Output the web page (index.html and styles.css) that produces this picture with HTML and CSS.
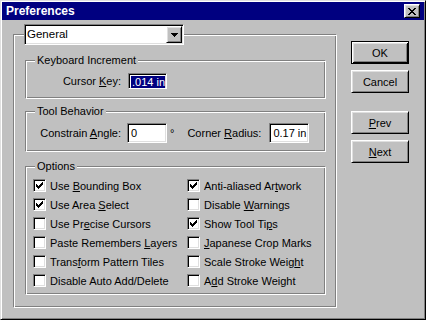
FILE: index.html
```html
<!DOCTYPE html>
<html>
<head>
<meta charset="utf-8">
<title>Preferences</title>
<link rel="stylesheet" href="styles.css">
</head>
<body>
<div class="window">
  <div class="titlebar">
    <span class="title">Preferences</span>
    <span class="close">
      <svg width="8" height="7" viewBox="0 0 8 7" shape-rendering="crispEdges"><path fill="#000" d="M0 0h2v1H0z M6 0h2v1H6z M1 1h2v1H1z M5 1h2v1H5z M2 2h4v1H2z M3 3h2v1H3z M2 4h4v1H2z M1 5h2v1H1z M5 5h2v1H5z M0 6h2v1H0z M6 6h2v1H6z"/></svg>
    </span>
  </div>
  <div class="body">
    <div class="frame outer">
      <div class="combo">
        <span class="combo-text">General</span>
        <span class="combo-btn">
          <svg width="7" height="4" viewBox="0 0 7 4" shape-rendering="crispEdges"><path fill="#000" d="M0 0h7v1H0z M1 1h5v1H1z M2 2h3v1H2z M3 3h1v1H3z"/></svg>
        </span>
      </div>

      <div class="frame group ki">
        <div class="caption">Keyboard Increment</div>
        <div class="row ki-row">
          <span class="lbl">Cursor <u>K</u>ey:</span>
          <span class="field field-sm"><span class="sel">.014 in</span></span>
        </div>
      </div>

      <div class="frame group tb">
        <div class="caption">Tool Behavior</div>
        <div class="row tb-row">
          <span class="lbl">Constrain <u>A</u>ngle:</span>
          <span class="field">0</span>
          <span class="deg">°</span>
          <span class="lbl2">Corner <u>R</u>adius:</span>
          <span class="field field-r">0.17 in</span>
        </div>
      </div>

      <div class="frame group opt">
        <div class="caption">Options</div>
        <div class="opts">
          <div class="chk"><span class="box on"></span><span>Use <u>B</u>ounding Box</span></div>
          <div class="chk"><span class="box on"></span><span>Anti-aliased Ar<u>t</u>work</span></div>
          <div class="chk"><span class="box on"></span><span>Use Area <u>S</u>elect</span></div>
          <div class="chk"><span class="box"></span><span>Disable <u>W</u>arnings</span></div>
          <div class="chk"><span class="box"></span><span>Use Pr<u>e</u>cise Cursors</span></div>
          <div class="chk"><span class="box on"></span><span>Show Tool Ti<u>p</u>s</span></div>
          <div class="chk"><span class="box"></span><span>Paste Remembers <u>L</u>ayers</span></div>
          <div class="chk"><span class="box"></span><span><u>J</u>apanese Crop Marks</span></div>
          <div class="chk"><span class="box"></span><span>Trans<u>f</u>orm Pattern Tiles</span></div>
          <div class="chk"><span class="box"></span><span>Scale Stroke Weig<u>h</u>t</span></div>
          <div class="chk"><span class="box"></span><span>Disable Auto Add/Delete</span></div>
          <div class="chk"><span class="box"></span><span>A<u>d</u>d Stroke Weight</span></div>
        </div>
      </div>
    </div>

    <div class="buttons">
      <span class="btn default">OK</span>
      <span class="btn">Cancel</span>
      <span class="btn gap"><u>P</u>rev</span>
      <span class="btn"><u>N</u>ext</span>
    </div>
  </div>
</div>
</body>
</html>
```

FILE: styles.css
```css
* { box-sizing: border-box; }

body {
  margin: 0;
  background: #c0c0c0;
  font-family: "Liberation Sans", Arial, sans-serif;
  font-size: 11px;
  color: #000;
}

u { text-decoration: underline; text-underline-offset: 1px; }

.window {
  width: 426px;
  height: 320px;
  background: #c0c0c0;
  border: 1px solid;
  border-color: #dfdfdf #000 #000 #dfdfdf;
  box-shadow: inset 1px 1px #fff, inset -1px -1px #808080;
  padding: 1px;
}

.titlebar {
  height: 18px;
  background: #000080;
  color: #fff;
  display: flex;
  align-items: center;
  justify-content: space-between;
  padding: 0 4px 0 4px;
}

.title {
  font-weight: bold;
  font-size: 12px;
}

.close {
  width: 16px;
  height: 14px;
  display: flex;
  align-items: center;
  justify-content: center;
  background: #c0c0c0;
  border: 1px solid;
  border-color: #fff #000 #000 #fff;
  box-shadow: inset 1px 1px #dfdfdf, inset -1px -1px #808080;
}

.body {
  display: flex;
  align-items: flex-start;
  padding-left: 11px;
}

.frame {
  border: 1px solid;
  border-color: #808080 #fff #fff #808080;
  box-shadow: inset 1px 1px #fff, inset -1px -1px #808080;
}

.outer {
  width: 324px;
  height: 274px;
  margin-top: 14px;
  padding: 0 10px 0 11px;
}

.combo {
  width: 160px;
  height: 21px;
  margin: -11px 0 0 -1px;
  display: flex;
  padding: 1px;
  background: #fff;
  border: 1px solid;
  border-color: #808080 #fff #fff #808080;
  box-shadow: inset 1px 1px #000, inset -1px -1px #dfdfdf;
}

.combo-text {
  flex: 1;
  padding-left: 1px;
  line-height: 17px;
  font-size: 11.5px;
}

.combo-btn {
  width: 16px;
  height: 17px;
  display: flex;
  align-items: center;
  justify-content: center;
  background: #c0c0c0;
  border: 1px solid;
  border-color: #fff #000 #000 #fff;
  box-shadow: inset 1px 1px #dfdfdf, inset -1px -1px #808080;
}

.caption {
  width: fit-content;
  margin: -7px 0 0 9px;
  padding: 0 2px;
  height: 13px;
  line-height: 13px;
  background: #c0c0c0;
  white-space: nowrap;
}

.ki { margin-top: 15px; height: 39px; }
.tb { margin-top: 12px; height: 41px; }
.opt { margin-top: 14px; height: 129px; }

.row {
  display: flex;
  align-items: center;
  padding-left: 11px;
  white-space: nowrap;
}

.ki-row { margin-top: 6px; }
.tb-row { margin-top: 5px; }

.lbl {
  width: 84px;
  text-align: right;
}

.field {
  width: 40px;
  height: 20px;
  margin-left: 6px;
  padding: 0 0 0 3px;
  line-height: 16px;
  background: #fff;
  border: 1px solid;
  border-color: #808080 #fff #fff #808080;
  box-shadow: inset 1px 1px #000, inset -1px -1px #dfdfdf;
  display: flex;
  align-items: center;
}

.field-sm {
  width: 39px;
  height: 16px;
  margin-left: 7px;
  padding: 2px 1px 1px 2px;
}

.sel {
  background: #000080;
  color: #fff;
  line-height: 12px;
  height: 12px;
  padding-left: 1px;
  width: 100%;
  white-space: nowrap;
  overflow: hidden;
}

.deg { margin-left: 3px; }

.lbl2 { margin-left: 13px; }

.field-r { margin-left: 8px; }

.opts {
  display: grid;
  grid-template-columns: 154px 1fr;
  grid-auto-rows: 19px;
  margin-top: 3px;
  padding-left: 7px;
}

.chk {
  display: flex;
  align-items: center;
  gap: 4px;
  white-space: nowrap;
}

.box {
  flex: none;
  width: 13px;
  height: 13px;
  background: #fff;
  border: 1px solid;
  border-color: #808080 #fff #fff #808080;
  box-shadow: inset 1px 1px #000, inset -1px -1px #dfdfdf;
}

.box.on {
  background: #fff url("data:image/svg+xml,%3Csvg xmlns='http://www.w3.org/2000/svg' width='11' height='11' shape-rendering='crispEdges'%3E%3Cpath d='M2 4h1v3H2z M3 5h1v3H3z M4 6h1v3H4z M5 5h1v3H5z M6 4h1v3H6z M7 3h1v3H7z M8 2h1v3H8z'/%3E%3C/svg%3E") no-repeat 0 0;
}

.buttons {
  display: flex;
  flex-direction: column;
  margin: 21px 0 0 14px;
}

.btn {
  width: 58px;
  height: 23px;
  display: flex;
  align-items: center;
  justify-content: center;
  background: #c0c0c0;
  border: 1px solid;
  border-color: #fff #000 #000 #fff;
  box-shadow: inset 1px 1px #dfdfdf, inset -1px -1px #808080;
  margin-top: 6px;
}

.btn.default {
  margin-top: 0;
  border-color: #000;
  box-shadow: inset 1px 1px #fff, inset -1px -1px #000, inset 2px 2px #dfdfdf, inset -2px -2px #808080;
}

.btn.gap { margin-top: 18px; }
```
